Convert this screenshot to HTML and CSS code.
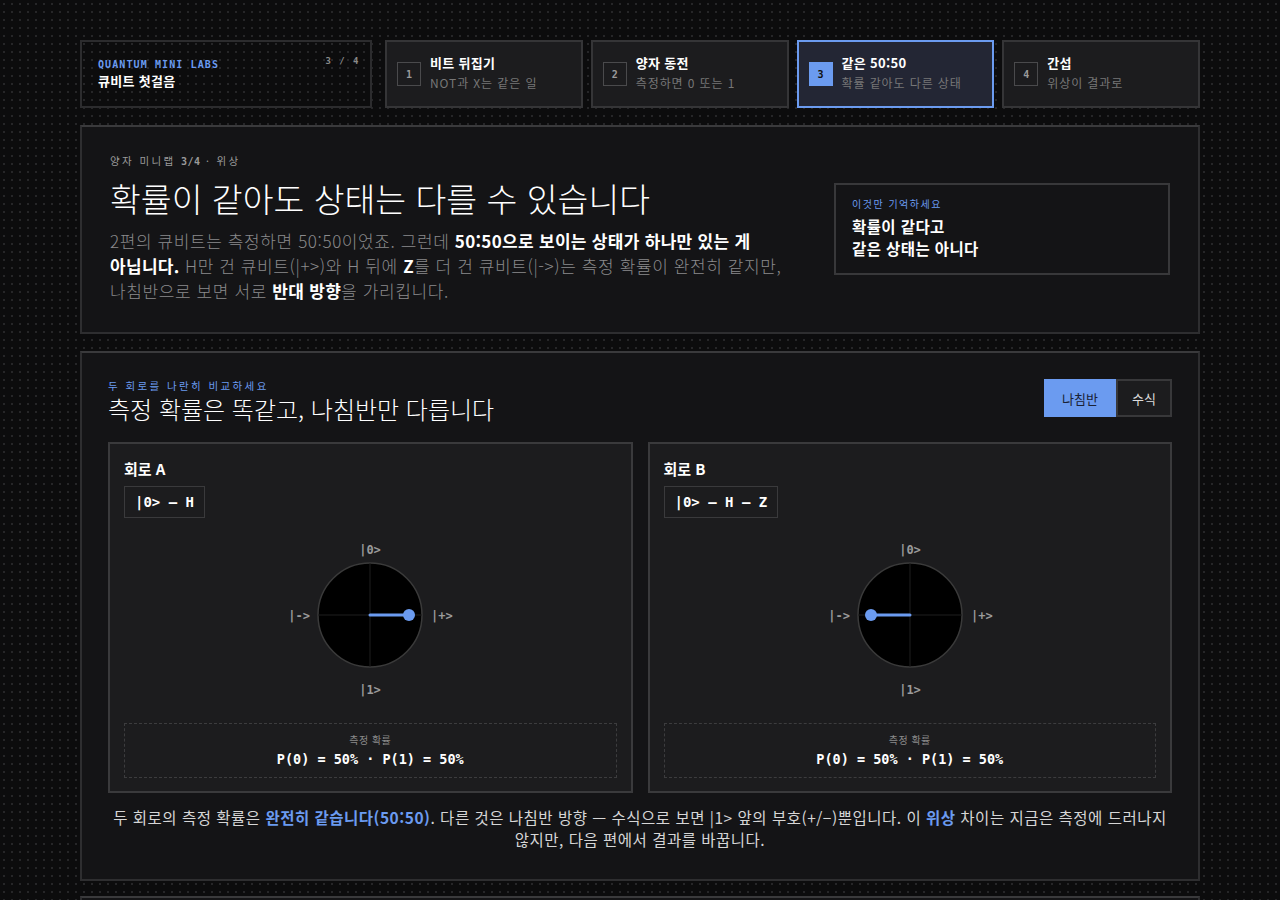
FILE: index.html
```html
<!DOCTYPE html>
<html lang="ko">
<head>
<meta charset="utf-8">
<title>큐비트 첫걸음 · 위상</title>
<link rel="stylesheet" href="styles.css">
</head>
<body>
<div class="wrap">
  <nav class="topnav">
    <div class="brand">
      <div class="brand-top">
        <span class="brand-name">QUANTUM MINI LABS</span>
        <span class="brand-count">3 / 4</span>
      </div>
      <div class="brand-sub">큐비트 첫걸음</div>
    </div>
    <div class="step">
      <span class="step-num">1</span>
      <div class="step-text"><div class="step-title">비트 뒤집기</div><div class="step-sub">NOT과 X는 같은 일</div></div>
    </div>
    <div class="step">
      <span class="step-num">2</span>
      <div class="step-text"><div class="step-title">양자 동전</div><div class="step-sub">측정하면 0 또는 1</div></div>
    </div>
    <div class="step active">
      <span class="step-num">3</span>
      <div class="step-text"><div class="step-title">같은 50:50</div><div class="step-sub">확률 같아도 다른 상태</div></div>
    </div>
    <div class="step">
      <span class="step-num">4</span>
      <div class="step-text"><div class="step-title">간섭</div><div class="step-sub">위상이 결과로</div></div>
    </div>
  </nav>

  <section class="panel hero">
    <div class="hero-main">
      <div class="eyebrow">양자 미니랩 <b>3/4</b> · 위상</div>
      <h1 class="hero-title">확률이 같아도 상태는 다를 수 있습니다</h1>
      <p class="hero-text">2편의 큐비트는 측정하면 50:50이었죠. 그런데 <strong>50:50으로 보이는 상태가 하나만 있는 게 아닙니다.</strong> H만 건 큐비트(|+&gt;)와 H 뒤에 <strong>Z</strong>를 더 건 큐비트(|-&gt;)는 측정 확률이 완전히 같지만, 나침반으로 보면 서로 <strong>반대 방향</strong>을 가리킵니다.</p>
    </div>
    <aside class="callout">
      <div class="callout-label">이것만 기억하세요</div>
      <div class="callout-text">확률이 같다고<br>같은 상태는 아니다</div>
    </aside>
  </section>

  <section class="panel compare">
    <div class="compare-head">
      <div>
        <div class="eyebrow blue">두 회로를 나란히 비교하세요</div>
        <h2 class="compare-title">측정 확률은 똑같고, 나침반만 다릅니다</h2>
      </div>
      <div class="toggle">
        <button class="tog on">나침반</button>
        <button class="tog">수식</button>
      </div>
    </div>

    <div class="cards">
      <div class="card">
        <div class="card-title">회로 A</div>
        <div class="circuit">|0&gt; — H</div>
        <div class="compass">
          <svg width="200" height="165" viewBox="0 0 200 165">
            <text x="100" y="19" class="lbl" text-anchor="middle">|0&gt;</text>
            <text x="100" y="159" class="lbl" text-anchor="middle">|1&gt;</text>
            <text x="40" y="85" class="lbl" text-anchor="end">|-&gt;</text>
            <text x="161" y="85" class="lbl" text-anchor="start">|+&gt;</text>
            <circle cx="100" cy="80" r="52" fill="#000" stroke="#3a3a3a" stroke-width="1.5"/>
            <line x1="48" y1="80" x2="152" y2="80" stroke="#1f1f1f" stroke-width="1"/>
            <line x1="100" y1="28" x2="100" y2="132" stroke="#1f1f1f" stroke-width="1"/>
            <line x1="100" y1="80" x2="138" y2="80" stroke="#6b9bf0" stroke-width="3" stroke-linecap="round"/>
            <circle cx="139" cy="80" r="6" fill="#6b9bf0"/>
          </svg>
        </div>
        <div class="prob">
          <div class="prob-label">측정 확률</div>
          <div class="prob-val">P(0) = 50% · P(1) = 50%</div>
        </div>
      </div>

      <div class="card">
        <div class="card-title">회로 B</div>
        <div class="circuit">|0&gt; — H — Z</div>
        <div class="compass">
          <svg width="200" height="165" viewBox="0 0 200 165">
            <text x="100" y="19" class="lbl" text-anchor="middle">|0&gt;</text>
            <text x="100" y="159" class="lbl" text-anchor="middle">|1&gt;</text>
            <text x="40" y="85" class="lbl" text-anchor="end">|-&gt;</text>
            <text x="161" y="85" class="lbl" text-anchor="start">|+&gt;</text>
            <circle cx="100" cy="80" r="52" fill="#000" stroke="#3a3a3a" stroke-width="1.5"/>
            <line x1="48" y1="80" x2="152" y2="80" stroke="#1f1f1f" stroke-width="1"/>
            <line x1="100" y1="28" x2="100" y2="132" stroke="#1f1f1f" stroke-width="1"/>
            <line x1="100" y1="80" x2="62" y2="80" stroke="#6b9bf0" stroke-width="3" stroke-linecap="round"/>
            <circle cx="61" cy="80" r="6" fill="#6b9bf0"/>
          </svg>
        </div>
        <div class="prob">
          <div class="prob-label">측정 확률</div>
          <div class="prob-val">P(0) = 50% · P(1) = 50%</div>
        </div>
      </div>
    </div>

    <p class="summary">두 회로의 측정 확률은 <b>완전히 같습니다(50:50)</b>. 다른 것은 나침반 방향 — 수식으로 보면 |1&gt; 앞의 부호(+/−)뿐입니다. 이 <b>위상</b> 차이는 지금은 측정에 드러나지 않지만, 다음 편에서 결과를 바꿉니다.</p>
  </section>

  <section class="panel next"></section>
</div>
</body>
</html>
```

FILE: styles.css
```css
* { box-sizing: border-box; }
html, body { margin: 0; padding: 0; }
body {
  background-color: #0c0c0d;
  background-image: radial-gradient(circle at 4px 4px, #262628 1px, transparent 1.2px);
  background-size: 8px 8px;
  color: #e8e8e8;
  font-family: "Noto Sans CJK KR", "Noto Sans", sans-serif;
}
.wrap {
  width: 1120px;
  margin: 0 auto;
  padding-top: 40px;
}

/* top nav */
.topnav {
  display: grid;
  grid-template-columns: 297px repeat(4, 1fr);
  column-gap: 8px;
}
.brand {
  border: 2px solid #2c2c2e;
  height: 68px;
  padding: 14px 10px 0 16px;
  margin-right: 5px;
}
.brand-top { display: flex; justify-content: space-between; align-items: flex-start; }
.brand-name {
  font-family: "DejaVu Sans Mono", monospace;
  font-weight: bold;
  font-size: 10px;
  letter-spacing: 1.1px;
  color: #6b9bf0;
  margin-top: 3px;
}
.brand-count {
  font-family: "DejaVu Sans Mono", monospace;
  font-weight: bold;
  font-size: 9px;
  color: #8a8a8a;
  letter-spacing: 1.5px;
}
.brand-sub { font-size: 13px; font-weight: 700; color: #fff; margin-top: 1px; letter-spacing: 0.3px; }

.step {
  display: flex;
  align-items: center;
  gap: 9px;
  height: 68px;
  padding: 0 10px;
  background: #1c1c1e;
  border: 2px solid #353537;
}
.step.active { background: #232634; border-color: #6b9bf0; }
.step-num {
  width: 24px; height: 24px;
  border: 1px solid #4a4a4c;
  display: flex; align-items: center; justify-content: center;
  font-family: "DejaVu Sans Mono", monospace;
  font-weight: bold;
  font-size: 10px;
  color: #9a9a9a;
  flex: none;
}
.step.active .step-num { background: #6b9bf0; border-color: #6b9bf0; color: #111; }
.step-text { margin-top: -4px; }
.step-title { font-size: 13px; font-weight: 700; color: #fff; line-height: 18px; letter-spacing: 0.3px; }
.step-sub { font-size: 12px; color: #777; line-height: 16px; margin-top: 3px; letter-spacing: 0.9px; white-space: nowrap; }

/* panels */
.panel {
  background: #141416;
  border: 2px solid #2e2e30;
  border-top-color: #3a3a3c;
}
.hero {
  margin-top: 17px;
  height: 209px;
  padding: 26px 28px 0 28px;
  display: flex;
  justify-content: space-between;
  align-items: flex-start;
}
.hero-main { width: 700px; }
.eyebrow {
  font-size: 10.5px;
  color: #9a9a9a;
  letter-spacing: 2.4px;
  line-height: 16px;
}
.eyebrow b { font-family: "DejaVu Sans Mono", monospace; font-size: 10px; letter-spacing: 0.5px; }
.eyebrow.blue { color: #6b9bf0; }
.hero-title {
  margin: 6px 0 0 0;
  font-size: 33.5px;
  font-weight: 300;
  color: #fff;
  line-height: 44px;
  letter-spacing: 0;
  white-space: nowrap;
}
.hero-text {
  margin: 8px 0 0 0;
  font-size: 17px;
  font-weight: 300;
  color: #8a8a8c;
  line-height: 25px;
  letter-spacing: 0.6px;
  width: 700px;
  word-break: keep-all;
}
.hero-text strong { color: #fff; font-weight: 700; letter-spacing: 0.3px; }
.callout {
  width: 336px;
  margin-top: 30px;
  border: 2px solid #38383a;
  padding: 12px 16px 14px 16px;
}
.callout-label { font-size: 10px; color: #6b9bf0; letter-spacing: 1.5px; line-height: 14px; }
.callout-text { font-size: 15.5px; font-weight: 700; color: #fff; line-height: 22px; margin-top: 4px; letter-spacing: 0.4px; }

.compare {
  margin-top: 17px;
  height: 530px;
  padding: 24px 26px 0 26px;
}
.compare-head { display: flex; justify-content: space-between; align-items: flex-start; }
.compare-head .eyebrow { margin-top: 1px; }
.compare-title {
  margin: 0;
  font-size: 24px;
  font-weight: 300;
  color: #fff;
  line-height: 30px;
  letter-spacing: 0;
}
.toggle { display: flex; margin-top: 2px; }
.tog {
  font-family: "Noto Sans CJK KR", sans-serif;
  font-size: 13px;
  height: 38px;
  border: 2px solid #38383a;
  background: #1c1c1e;
  color: #ddd;
  padding: 0;
  width: 56px;
}
.tog.on { width: 72px; background: #6b9bf0; border-color: #6b9bf0; color: #1a2236; }

.cards {
  display: grid;
  grid-template-columns: 1fr 1fr;
  gap: 15px;
  margin-top: 18px;
}
.card {
  background: #1c1c1e;
  border: 2px solid #3a3a3c;
  height: 351px;
  padding: 14px 14px 0 14px;
  display: flex;
  flex-direction: column;
  align-items: flex-start;
}
.card-title { font-size: 15px; font-weight: 700; color: #fff; line-height: 22px; }
.circuit {
  margin-top: 6px;
  border: 1px solid #3a3a3c;
  padding: 0 10px;
  height: 32px;
  line-height: 30px;
  font-family: "DejaVu Sans Mono", monospace;
  font-weight: bold;
  font-size: 14px;
  color: #fff;
}
.compass { align-self: center; margin-top: 17px; height: 165px; }
.compass svg { display: block; }
.lbl {
  font-family: "DejaVu Sans Mono", monospace;
  font-weight: bold;
  font-size: 12px;
  fill: #9a9a9a;
}
.prob {
  align-self: stretch;
  margin-top: 23px;
  border: 1px dashed #3c3c3e;
  height: 55px;
  text-align: center;
  padding-top: 9px;
}
.prob-label { font-size: 10px; color: #8a8a8a; line-height: 14px; letter-spacing: 0.5px; }
.prob-val {
  font-family: "DejaVu Sans Mono", monospace;
  font-weight: bold;
  font-size: 13.5px;
  color: #fff;
  line-height: 20px;
  margin-top: 2px;
}
.summary {
  margin: 13px 0 0 0;
  text-align: center;
  font-size: 15.5px;
  font-weight: 400;
  color: #d6d6d6;
  line-height: 22px;
  letter-spacing: 0.5px;
  padding: 0;
  word-break: keep-all;
}
.summary b { color: #6b9bf0; font-weight: 700; }

.next { margin-top: 15px; height: 40px; }
```
